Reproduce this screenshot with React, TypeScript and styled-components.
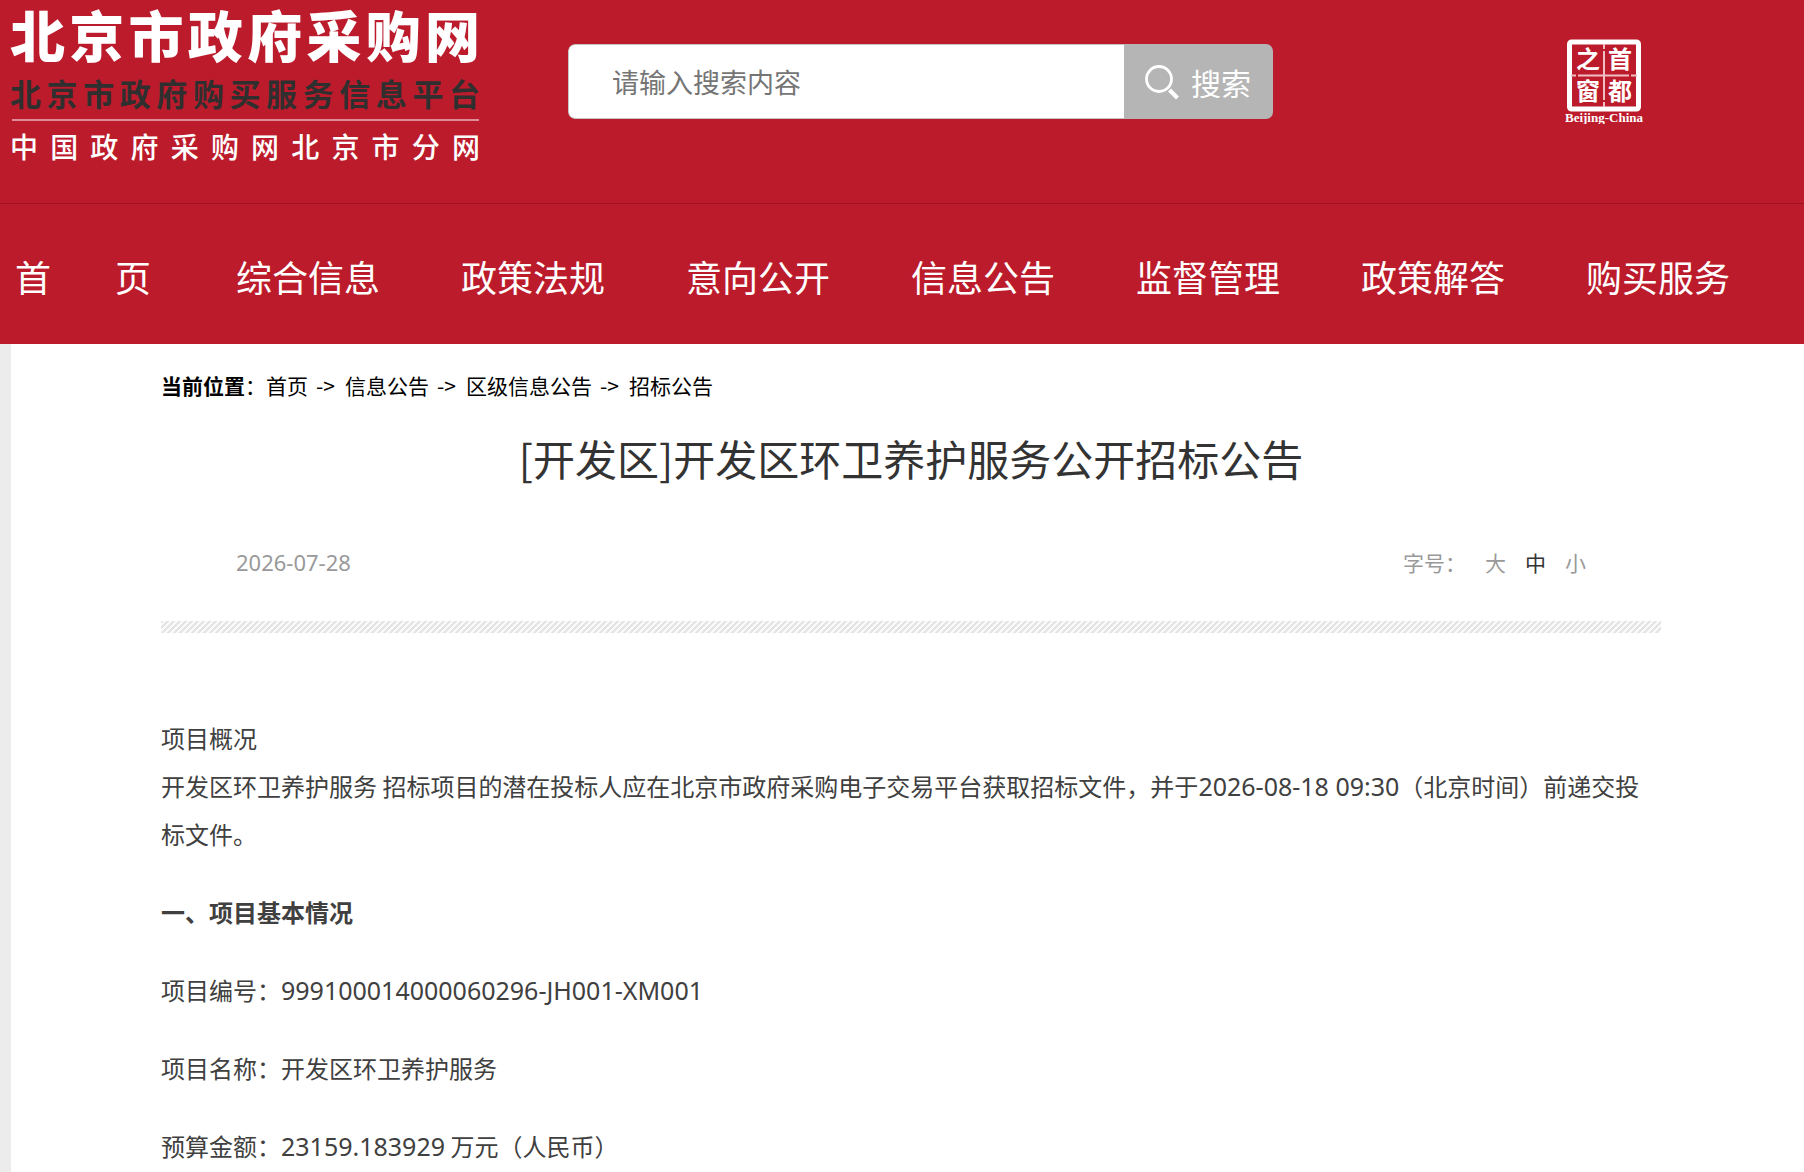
import React, { useState } from "react";
import styled, { createGlobalStyle } from "styled-components";

const RED = "#bc1b2c";

const GlobalStyle = createGlobalStyle`
  * { box-sizing: border-box; }
  body {
    margin: 0;
    background: #ececec;
    font-family: "Noto Sans CJK SC", "Noto Sans", sans-serif;
    color: #404040;
  }
  a { color: inherit; text-decoration: none; }
  p, h1, h2 { margin: 0; }
`;

const Page = styled.div`
  min-height: 100vh;
  display: flex;
  flex-direction: column;
  overflow-x: hidden;
`;

const Header = styled.header`
  background: ${RED};
  color: #fff;
`;

const TopBar = styled.div`
  display: flex;
  align-items: flex-start;
  height: 204px;
  padding: 0 158px 0 10px;
  border-bottom: 1px solid #9c1221;
`;

const Logo = styled.a`
  display: flex;
  flex-direction: column;
  width: 470px;
  flex-shrink: 0;
`;

const LogoLine = styled.span<{ $size: number; $height: number; $weight: number; $color?: string }>`
  display: block;
  font-size: ${(p) => p.$size}px;
  line-height: ${(p) => p.$height}px;
  font-weight: ${(p) => p.$weight};
  color: ${(p) => p.$color ?? "#fff"};
  white-space: nowrap;
  text-align: justify;
  text-align-last: justify;
`;

const LogoRule = styled.span`
  height: 2px;
  margin: 0 1px 0 2px;
  background: #dd8d96;
`;

const SearchForm = styled.form`
  display: flex;
  width: 705px;
  height: 75px;
  margin: 44px 0 0 88px;
  border-radius: 7px;
  overflow: hidden;
`;

const SearchInput = styled.input`
  flex: 1;
  min-width: 0;
  padding: 0 43px;
  border: 1px solid #c4c4c4;
  border-right: 0;
  border-radius: 7px 0 0 7px;
  background: #fff;
  color: #333;
  font: inherit;
  font-size: 27px;
  outline: none;
  &::placeholder { color: #757575; opacity: 1; }
`;

const SearchButton = styled.button`
  display: flex;
  align-items: center;
  gap: 10px;
  width: 149px;
  padding: 0 0 0 20px;
  border: 0;
  background: #b5b5b5;
  color: #fff;
  font: inherit;
  font-size: 30px;
  cursor: pointer;
`;

const SealLink = styled.a`
  margin: 38px 0 0 auto;
  line-height: 0;
`;

const Nav = styled.nav`
  display: flex;
  gap: 81px;
  height: 140px;
  padding: 3px 0 0 11px;
`;

const NavLink = styled.a<{ $gap?: number }>`
  display: flex;
  justify-content: center;
  align-items: center;
  gap: ${(p) => p.$gap ?? 0}px;
  min-width: 144px;
  font-size: 36px;
  line-height: 48px;
  white-space: nowrap;
`;

const Main = styled.main`
  flex: 1;
  margin-left: 11px;
  padding: 22px 143px 0 150px;
  background: #fff;
`;

const Breadcrumb = styled.nav`
  display: flex;
  font-size: 21px;
  line-height: 38px;
  color: #000;
`;

const Arrow = styled.span`
  width: 37px;
  padding-right: 2px;
  text-align: center;
`;

const Title = styled.h1`
  padding: 17px 0 0;
  font-size: 42px;
  line-height: 74px;
  font-weight: 400;
  color: #333;
  text-align: center;
`;

const Meta = styled.div`
  display: flex;
  justify-content: space-between;
  align-items: center;
  height: 38px;
  margin-top: 48px;
  padding: 0 75px;
  font-size: 21px;
  color: #999;
`;

const PubDate = styled.time`
  font-family: "Noto Sans", sans-serif;
  font-size: 22px;
`;

const SizePicker = styled.div`
  display: flex;
  align-items: center;
  gap: 19px;
`;

const SizeButton = styled.button<{ $active: boolean }>`
  padding: 0;
  border: 0;
  background: none;
  font: inherit;
  color: ${(p) => (p.$active ? "#333" : "#999")};
  cursor: pointer;
`;

const Stripe = styled.div`
  height: 12px;
  margin: 40px 0 81px;
  background: linear-gradient(135deg, #e4e4e4 0 20%, #fafafa 20% 50%, #e4e4e4 50% 70%, #fafafa 70%) 0 0 / 6px 6px;
`;

const Article = styled.article`
  display: flex;
  flex-direction: column;
  gap: 30px;
  font-size: 24px;
  line-height: 48px;
`;

const SectionTitle = styled.h2`
  font-size: 24px;
  line-height: 48px;
  font-weight: 700;
`;

const Latin = styled.span`
  font-family: "Noto Sans", sans-serif;
  font-size: 25px;
  line-height: 24px;
`;

const NAV = ["综合信息", "政策法规", "意向公开", "信息公告", "监督管理", "政策解答", "购买服务"];
const CRUMBS = ["首页", "信息公告", "区级信息公告", "招标公告"];
const SIZES = ["大", "中", "小"];

const SearchIcon = () => (
  <svg width="37" height="36" viewBox="0 0 37 36" fill="none" stroke="#fff" aria-hidden="true">
    <circle cx="15" cy="15" r="12.5" strokeWidth="2.8" />
    <path d="M25.500 26 33.500 34" strokeWidth="4" />
  </svg>
);

const Seal = () => (
  <svg width="84" height="86" viewBox="0 0 84 86" role="img" aria-label="首都之窗">
    <rect x="7.500" y="4" width="69" height="67" rx="2" fill="none" stroke="#fff" strokeWidth="5" />
    <path d="M42 6V11M42 13V62M42 64V69M9 37.500H14M16 37.500H67M69 37.500H75" stroke="#f0bfc5" strokeWidth="2" />
    <g fill="#fff" fontFamily="'Noto Sans CJK SC', sans-serif" fontWeight="700" fontSize="24" textAnchor="middle">
      <text x="26" y="30">之</text>
      <text x="58" y="30">首</text>
      <text x="26" y="62">窗</text>
      <text x="58" y="62">都</text>
    </g>
    <text x="42" y="84" fill="#fff" fontFamily="'Liberation Serif', serif" fontWeight="700" fontSize="13" textAnchor="middle">
      Beijing-China
    </text>
  </svg>
);

export default function App() {
  const [size, setSize] = useState("中");
  return (
    <Page>
      <GlobalStyle />
      <Header>
        <TopBar>
          <Logo href="#">
            <LogoLine $size={55} $height={66} $weight={900}>北京市政府采购网</LogoLine>
            <LogoLine $size={31} $height={53} $weight={700} $color="#2f2f2f">北京市政府购买服务信息平台</LogoLine>
            <LogoRule />
            <LogoLine $size={28} $height={50} $weight={500}>中国政府采购网北京市分网</LogoLine>
          </Logo>
          <SearchForm onSubmit={(e) => e.preventDefault()}>
            <SearchInput type="text" placeholder="请输入搜索内容" aria-label="请输入搜索内容" />
            <SearchButton type="submit">
              <SearchIcon />
              搜索
            </SearchButton>
          </SearchForm>
          <SealLink href="#">
            <Seal />
          </SealLink>
        </TopBar>
        <Nav>
          <NavLink href="#" $gap={64}>
            <span>首</span>
            <span>页</span>
          </NavLink>
          {NAV.map((item) => (
            <NavLink href="#" key={item}>{item}</NavLink>
          ))}
        </Nav>
      </Header>
      <Main>
        <Breadcrumb>
          <b>当前位置</b>：
          {CRUMBS.map((crumb, i) => (
            <React.Fragment key={crumb}>
              {i > 0 && <Arrow>-&gt;</Arrow>}
              <a href="#">{crumb}</a>
            </React.Fragment>
          ))}
        </Breadcrumb>
        <Title>[开发区]开发区环卫养护服务公开招标公告</Title>
        <Meta>
          <PubDate>2026-07-28</PubDate>
          <SizePicker>
            <span>字号：</span>
            {SIZES.map((s) => (
              <SizeButton type="button" key={s} $active={s === size} onClick={() => setSize(s)}>{s}</SizeButton>
            ))}
          </SizePicker>
        </Meta>
        <Stripe />
        <Article>
          <p>
            项目概况
            <br />
            开发区环卫养护服务 招标项目的潜在投标人应在北京市政府采购电子交易平台获取招标文件，并于<Latin>2026-08-18 09:30</Latin>（北京时间）前递交投标文件。
          </p>
          <SectionTitle>一、项目基本情况</SectionTitle>
          <p>项目编号：<Latin>999100014000060296-JH001-XM001</Latin></p>
          <p>项目名称：开发区环卫养护服务</p>
          <p>预算金额：<Latin>23159.183929</Latin> 万元（人民币）</p>
        </Article>
      </Main>
    </Page>
  );
}
